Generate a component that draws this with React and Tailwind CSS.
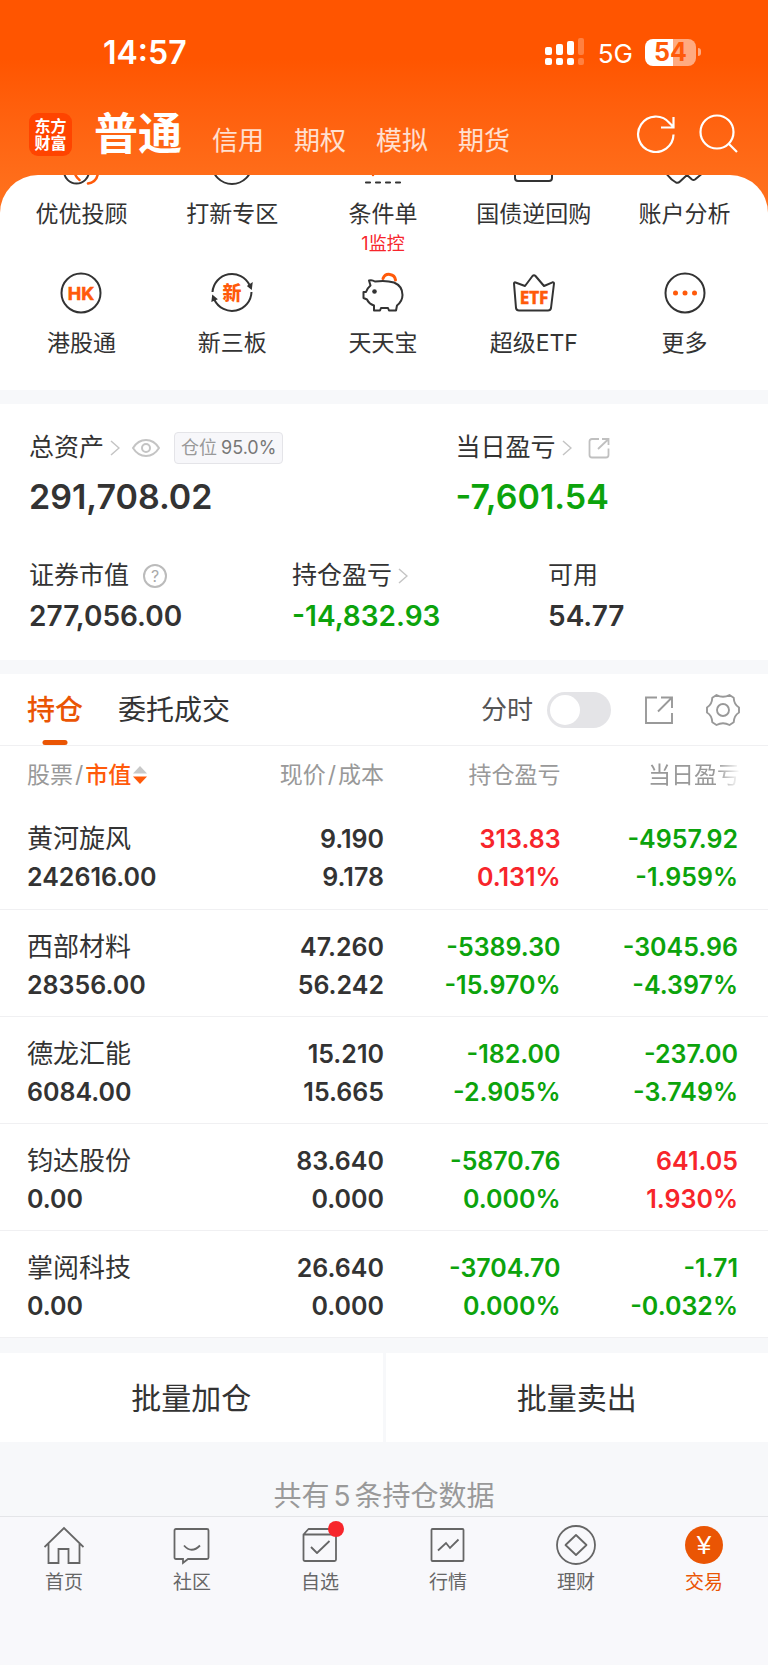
import React, { useState } from 'react';

const tones = {
  dark: 'text-[#333333]',
  up: 'text-[#f7252b]',
  down: 'text-[#0ca30c]',
};

const accountTabs = ['信用', '期权', '模拟', '期货'];

const holdings = [
  { name: '黄河旋风', value: '242616.00', price: '9.190', cost: '9.178', profit: '313.83', profitPct: '0.131%', day: '-4957.92', dayPct: '-1.959%', profitTone: 'up', dayTone: 'down' },
  { name: '西部材料', value: '28356.00', price: '47.260', cost: '56.242', profit: '-5389.30', profitPct: '-15.970%', day: '-3045.96', dayPct: '-4.397%', profitTone: 'down', dayTone: 'down' },
  { name: '德龙汇能', value: '6084.00', price: '15.210', cost: '15.665', profit: '-182.00', profitPct: '-2.905%', day: '-237.00', dayPct: '-3.749%', profitTone: 'down', dayTone: 'down' },
  { name: '钧达股份', value: '0.00', price: '83.640', cost: '0.000', profit: '-5870.76', profitPct: '0.000%', day: '641.05', dayPct: '1.930%', profitTone: 'down', dayTone: 'up' },
  { name: '掌阅科技', value: '0.00', price: '26.640', cost: '0.000', profit: '-3704.70', profitPct: '0.000%', day: '-1.71', dayPct: '-0.032%', profitTone: 'down', dayTone: 'down' },
];

/* ---------- icons ---------- */

function Icon({ size = 'size-[42px]', box = '0 0 42 42', width = 2, children }) {
  return (
    <svg viewBox={box} className={`${size} shrink-0`} fill="none" stroke="currentColor" strokeWidth={width} aria-hidden="true">
      {children}
    </svg>
  );
}

const AdvisorIcon = () => (
  <Icon>
    <circle cx="16.500" cy="28" r="12.500" />
    <path d="M15 31c1 2.500 2.500 4.500 4.500 6M28 40.500c6-1 9.500-5 10-11" stroke="#ff5a0a" strokeWidth="2.500" strokeLinecap="round" />
  </Icon>
);

const CircleIcon = () => (
  <Icon><circle cx="21" cy="21" r="20" /></Icon>
);

const ConditionIcon = () => (
  <Icon>
    <path d="M11 6v26" stroke="#ff5a0a" strokeLinecap="round" strokeWidth="2.500" />
    <path d="M4 39.500h36" strokeDasharray="4 6" strokeLinecap="round" strokeWidth="2.200" />
  </Icon>
);

const BondIcon = () => (
  <Icon><rect x="2" y="8" width="37" height="30" rx="3" /></Icon>
);

const AccountIcon = () => (
  <Icon><path d="M2 30Q6 36 12 39.500q2 1 4-1L23 32l5 4.500q1.500 1 3 0L40 29" strokeLinejoin="round" /></Icon>
);

const HkIcon = () => (
  <Icon>
    <circle cx="21" cy="21" r="19.500" />
    <text x="21" y="27.500" textAnchor="middle" fill="#ff5a0a" stroke="#ff5a0a" strokeWidth="0.600" fontSize="18" fontWeight="700">HK</text>
  </Icon>
);

const NewBoardIcon = () => (
  <Icon>
    <path d="M1.500 20A19.500 19.500 0 0 1 38.500 13M40.500 20A19.500 19.500 0 0 1 3.500 28" />
    <path d="m37.500 14 3-2-.500 4zM1.500 28.500l.500-4 3 2.500z" fill="currentColor" />
    <text x="21" y="28" textAnchor="middle" fill="#ff5a0a" stroke="none" fontSize="19" fontWeight="900">新</text>
  </Icon>
);

const PiggyIcon = () => (
  <Icon>
    <path d="M21 6.500a6.500 6.500 0 0 1 12.500 1.500" stroke="#ff5a0a" strokeWidth="3" strokeLinecap="round" />
    <path d="M13 9.500Q10 7.500 7 8.500l1.500 5Q5 16.500 4 20H1.500v6L5 27.500Q7 32 12 33.500V38.500h6l1-2.500h7l1 2.500h7l1-5Q40.500 29 40.500 23 40.500 14 32 10.500 24 8 13 9.500z" strokeLinejoin="round" />
    <circle cx="12.500" cy="19.500" r="2.300" fill="currentColor" stroke="none" />
  </Icon>
);

const EtfIcon = () => (
  <Icon>
    <path d="M1 11.500 3 36q.500 2.500 3 2.500h29q2.500 0 3-2.500l3-24.500q0-1.500-1.500-1.200L31 14 22.500 4q-1.500-1.500-3 0L12 14 2.500 10.500Q1 10 1 11.500z" strokeLinejoin="round" />
    <text x="21" y="31.500" textAnchor="middle" fill="#ff5a0a" stroke="#ff5a0a" strokeWidth="0.600" fontSize="17" fontWeight="700" fontFamily="Open Sans">
      ETF
    </text>
  </Icon>
);

const MoreIcon = () => (
  <Icon>
    <circle cx="21" cy="21" r="19.500" />
    <g fill="#ff5a0a" stroke="none">
      <circle cx="11.500" cy="21" r="2.500" />
      <circle cx="21" cy="21" r="2.500" />
      <circle cx="30.500" cy="21" r="2.500" />
    </g>
  </Icon>
);

const Chevron = () => (
  <svg viewBox="0 0 10 16" className="w-2.5 h-4 shrink-0 text-[#c4c4c4]" fill="none" stroke="currentColor" strokeWidth="1.500" aria-hidden="true">
    <path d="m1 1 8 7-8 7" />
  </svg>
);

const HomeIcon = () => (
  <Icon size="size-10" box="0 0 40 40" width="1.800">
    <path d="M.500 22 20 3l19.500 19M4.500 18.500v19.500h10V24h10v14h11V18.500" />
  </Icon>
);

const CommunityIcon = () => (
  <Icon size="size-10" box="0 0 40 40" width="1.800">
    <path d="M4 4h31q1.500 0 1.500 1.500v27q0 1.500-1.500 1.500H16l-5 4v-4H4q-1.500 0-1.500-1.500v-27Q2.500 4 4 4z" />
    <path d="M12 20.500q7.500 8.500 16 0" />
  </Icon>
);

const WatchlistIcon = () => (
  <Icon size="size-10" box="0 0 40 40" width="1.800">
    <path d="M3.500 9.500h32.500v25q0 1.500-1.500 1.500H5Q3.500 36 3.500 34.500zl5-5.500h22l5.500 5.500M11 22l6 6L29.500 16" strokeLinejoin="round" />
  </Icon>
);

const MarketIcon = () => (
  <Icon size="size-10" box="0 0 40 40" width="1.800">
    <rect x="3.500" y="4" width="32" height="32" rx="1" />
    <path d="m10 25.500 8-7.500 4 5 8.500-8.500" />
  </Icon>
);

const WealthIcon = () => (
  <Icon size="size-10" box="0 0 40 40" width="1.800">
    <circle cx="20" cy="20" r="19" />
    <path d="m20 10 10.500 10L20 30 9.500 20z" strokeLinejoin="round" />
  </Icon>
);

const TradeIcon = () => (
  <Icon size="size-10" box="0 0 40 40" width="0">
    <circle cx="20" cy="20" r="19" fill="#ea5504" />
    <text x="20" y="29" textAnchor="middle" fill="#fff" stroke="none" fontSize="26" fontFamily="Liberation Sans">¥</text>
  </Icon>
);

const shortcutRows = [
  [
    { label: '优优投顾', icon: AdvisorIcon },
    { label: '打新专区', icon: CircleIcon },
    { label: '条件单', icon: ConditionIcon, note: '1监控' },
    { label: '国债逆回购', icon: BondIcon },
    { label: '账户分析', icon: AccountIcon },
  ],
  [
    { label: '港股通', icon: HkIcon },
    { label: '新三板', icon: NewBoardIcon },
    { label: '天天宝', icon: PiggyIcon },
    { label: '超级ETF', icon: EtfIcon },
    { label: '更多', icon: MoreIcon },
  ],
];

const navItems = [
  { label: '首页', icon: HomeIcon },
  { label: '社区', icon: CommunityIcon },
  { label: '自选', icon: WatchlistIcon, dot: true },
  { label: '行情', icon: MarketIcon },
  { label: '理财', icon: WealthIcon },
  { label: '交易', icon: TradeIcon, active: true },
];

/* ---------- sections ---------- */

function StatusBar() {
  return (
    <div className="flex h-[104px] items-center justify-between pl-[103px] pr-[67px]">
      <span className="pt-0.5 text-[32px] font-semibold">14:57</span>
      <div className="flex items-center">
        <svg viewBox="0 0 39 28" className="w-[39px] h-7" fill="#fff" aria-hidden="true">
          <rect x="0" y="9" width="7" height="8" rx="2" />
          <rect x="11" y="6" width="7" height="11" rx="2" />
          <rect x="22" y="3" width="7" height="14" rx="2" />
          <rect x="0" y="20" width="7" height="7" rx="2" />
          <rect x="11" y="20" width="7" height="7" rx="2" />
          <rect x="22" y="20" width="7" height="7" rx="2" />
          <g opacity="0.250">
            <rect x="33" y="0" width="6" height="17" rx="2" />
            <rect x="33" y="20" width="6" height="7" rx="2" />
          </g>
        </svg>
        <span className="ml-3.5 pt-0.5 text-[26px]">5G</span>
        <div className="ml-3 flex h-[27px] w-[51px] items-center justify-center rounded-lg bg-linear-to-r from-white from-55% to-[#ffaa80] to-55% text-[25px]/[27px] font-bold text-[#ff5a0a]">
          54
        </div>
        <div className="ml-0.5 h-2 w-[3px] rounded-r-full bg-[#ffaa80]" />
      </div>
    </div>
  );
}

function Header() {
  return (
    <header className="text-white">
      <StatusBar />
      <div className="flex h-[71px] items-start pl-[29px] pr-[30px]">
        <div className="mt-[9px] flex size-[43px] flex-col items-center justify-center rounded-[9px] bg-[#ff4400] text-base/[17px] font-bold">
          <span>东方</span>
          <span>财富</span>
        </div>
        <nav className="ml-[22px] flex items-baseline gap-[30px]">
          <a href="#normal" className="text-[44px]/[60px] font-bold">普通</a>
          {accountTabs.map((tab) => (
            <a key={tab} href={`#${tab}`} className="text-[26px] text-white/80">{tab}</a>
          ))}
        </nav>
        <div className="ml-auto mt-2.5 flex gap-[22px]">
          <button type="button" aria-label="刷新">
            <Icon size="size-10" box="0 0 40 40" width="2.200">
              <path d="M37.500 20.500A17.700 17.700 0 1 1 33.500 9L37 12.500M25 13.500h12.500V3" />
            </Icon>
          </button>
          <button type="button" aria-label="搜索">
            <Icon size="size-10" box="0 0 40 40" width="2.200">
              <circle cx="19" cy="18" r="16.500" />
              <path d="m30.500 29.500 8.500 8.500" />
            </Icon>
          </button>
        </div>
      </div>
    </header>
  );
}

function Shortcuts() {
  return (
    <section className="overflow-hidden rounded-t-[38px] bg-white pb-[31px] pl-1.5 pr-2 text-[#333333]">
      {shortcutRows.map((row, idx) => (
        <div key={idx} className={`grid grid-cols-5 ${idx === 0 ? '-mt-8' : 'mt-4'}`}>
          {row.map(({ label, icon: Glyph, note }) => (
            <a key={label} href={`#${label}`} className="flex flex-col items-center">
              <Glyph />
              <span className="mt-[13px] whitespace-nowrap text-[23px]/8">{label}</span>
              {note && <span className="mt-0.5 text-lg/6 text-[#f7252b]">{note}</span>}
            </a>
          ))}
        </div>
      ))}
    </section>
  );
}

function Assets() {
  return (
    <section className="bg-white pb-[26px] pl-[29px] pr-7 pt-[26px] text-[#333333]">
      <div className="grid grid-cols-[60fr_40fr]">
        <div>
          <div className="flex h-9 items-center text-[25px]">
            总资产
            <span className="ml-1.5"><Chevron /></span>
            <button type="button" aria-label="隐藏资产" className="ml-3 text-[#c4c4c4]">
              <svg viewBox="0 0 28 20" className="w-7 h-5" fill="none" stroke="currentColor" strokeWidth="2" aria-hidden="true">
                <path d="M1 10Q6 2 14 2t13 8q-5 8-13 8T1 10z" />
                <circle cx="14" cy="10" r="4" />
              </svg>
            </button>
            <span className="ml-3.5 flex h-8 items-center gap-1 rounded border border-[#e4e4e8] bg-[#f7f7fa] px-1.5 text-lg text-[#777777]">
              <span className="text-[#999999]">仓位</span> 95.0%
            </span>
          </div>
          <p className="mt-[11px] text-[34px]/10 font-semibold">291,708.02</p>
        </div>
        <div>
          <div className="flex h-9 items-center text-[25px]">
            当日盈亏
            <span className="ml-1.5"><Chevron /></span>
            <button type="button" aria-label="分享当日盈亏" className="ml-4 text-[#c0c0c0]">
              <svg viewBox="0 0 22 22" className="size-[22px]" fill="none" stroke="currentColor" strokeWidth="1.800" aria-hidden="true">
                <path d="M11 2H4Q1.500 2 1.500 4.500V18q0 2.500 2.500 2.500h14q2.500 0 2.500-2.500v-6.500M14 2h6.500v6M20 2.500l-10 9.500" />
              </svg>
            </button>
          </div>
          <p className="mt-[11px] text-[34px]/10 font-semibold text-[#0ca30c]">-7,601.54</p>
        </div>
      </div>
      <div className="mt-[41px] grid grid-cols-[37fr_36fr_27fr]">
        <div>
          <div className="flex h-9 items-center text-[25px]">
            证券市值
            <button type="button" aria-label="证券市值说明" className="ml-3.5 flex size-6 items-center justify-center rounded-full border-2 border-[#bbbbbb] text-base text-[#aaaaaa]">
              ?
            </button>
          </div>
          <p className="mt-1 text-[28px]/9 font-semibold">277,056.00</p>
        </div>
        <div>
          <div className="flex h-9 items-center text-[25px]">
            持仓盈亏
            <span className="ml-1.5"><Chevron /></span>
          </div>
          <p className="mt-1 text-[28px]/9 font-semibold text-[#0ca30c]">-14,832.93</p>
        </div>
        <div>
          <div className="flex h-9 items-center text-[25px]">可用</div>
          <p className="mt-1 text-[28px]/9 font-semibold">54.77</p>
        </div>
      </div>
    </section>
  );
}

function HoldingTabs() {
  const [minuteChart, setMinuteChart] = useState(false);

  return (
    <div className="flex h-[72px] items-center border-b border-[#f0f0f2] pl-[27px] pr-7 text-[28px] text-[#333333]">
      <button type="button" className="relative h-full font-medium text-[#ea5504]">
        持仓
        <span className="absolute bottom-0 left-1/2 h-[5px] w-[25px] -translate-x-1/2 rounded-sm bg-[#ea5504]" />
      </button>
      <button type="button" className="ml-[35px] h-full">委托成交</button>
      <label htmlFor="minute" className="ml-auto text-[26px] text-[#555555]">分时</label>
      <input
        id="minute"
        type="checkbox"
        checked={minuteChart}
        onChange={(e) => setMinuteChart(e.target.checked)}
        className="ml-3.5 h-9 w-16 appearance-none rounded-full bg-[#e4e4e7] p-[3px] before:block before:size-[30px] before:rounded-full before:bg-white checked:bg-[#ea5504] checked:before:ml-auto"
      />
      <button type="button" aria-label="分享持仓" className="ml-[34px] text-[#999999]">
        <Icon size="size-7" box="0 0 28 28" width="1.900">
          <path d="M12 1.500H1v25.500h26V17M16 1.500h11V12M26.500 2 13 15.500" />
        </Icon>
      </button>
      <button type="button" aria-label="设置" className="ml-[33px] text-[#999999]">
        <Icon size="size-[34px]" box="0 0 34 34" width="1.900">
          <path d="M10.500 2q6.500 3.500 13 0l4.200 2.700q.3 6.800 5.300 9.800v5q-5 3-5.300 9.800L23.500 32q-6.500-3.500-13 0l-4.200-2.700Q6 22.500 1 19.500v-5q5-3 5.300-9.800z" strokeLinejoin="round" />
          <circle cx="17" cy="17" r="6" />
        </Icon>
      </button>
    </div>
  );
}

function PairCell({ top, bottom, tone, className = '' }) {
  return (
    <td className={`pt-1.5 text-right ${tones[tone]} ${className}`}>
      <div>{top}</div>
      <div>{bottom}</div>
    </td>
  );
}

function Holdings() {
  return (
    <section className="bg-white">
      <HoldingTabs />
      <table className="w-full table-fixed">
        <thead>
          <tr className="h-14 text-[23px] text-[#999999] *:pt-0.5 *:font-normal">
            <th className="w-[26%] whitespace-nowrap pl-[27px] text-left">
              <div className="flex items-center">
                股票<span className="mx-0.5">/</span>
                <button type="button" className="flex items-center gap-0.5 font-medium text-[#ff5a0a]">
                  市值
                  <svg viewBox="0 0 14 20" className="w-3.5 h-5" aria-hidden="true">
                    <path d="M0 8.500 7 1l7 7.500z" fill="#c8c8c8" />
                    <path d="M0 11.500 7 19l7-7.500z" fill="#ff5a0a" />
                  </svg>
                </button>
              </div>
            </th>
            <th className="w-[24%] text-right">现价<span className="mx-0.5">/</span>成本</th>
            <th className="w-[23%] text-right">持仓盈亏</th>
            <th className="w-[27%] pr-7 text-right">
              <span className="[mask-image:linear-gradient(to_right,black_75%,transparent)]">当日盈亏</span>
            </th>
          </tr>
        </thead>
        <tbody className="text-[25px]/[38px] font-semibold text-[#333333]">
          {holdings.map((row) => (
            <tr key={row.name} className="h-[107px] border-b border-[#f0f0f2]">
              <td className="pl-[27px] pt-1.5">
                <div className="text-[26px]/[38px] font-normal">{row.name}</div>
                <div>{row.value}</div>
              </td>
              <PairCell top={row.price} bottom={row.cost} tone="dark" />
              <PairCell top={row.profit} bottom={row.profitPct} tone={row.profitTone} />
              <PairCell top={row.day} bottom={row.dayPct} tone={row.dayTone} className="pr-[30px]" />
            </tr>
          ))}
        </tbody>
      </table>
    </section>
  );
}

function BottomNav() {
  return (
    <nav className="grid grow grid-cols-6 border-t border-[#e4e5e8] bg-[#f8f8fb] pb-[70px] pt-2">
      {navItems.map(({ label, icon: Glyph, dot, active }) => (
        <a
          key={label}
          href={`#${label}`}
          className={`flex flex-col items-center ${active ? 'text-[#ea5504]' : 'text-[#666666]'}`}
        >
          <span className="relative">
            <Glyph />
            {dot && <span className="absolute -right-1 -top-1 size-4 rounded-full bg-[#f7252b]" />}
          </span>
          <span className="mt-1.5 text-[19px]/6">{label}</span>
        </a>
      ))}
    </nav>
  );
}

export default function App() {
  return (
    <div className="flex min-h-screen flex-col bg-[#f7f8fa] font-['Inter','Noto_Sans_CJK_SC',sans-serif]">
      <div className="bg-linear-to-b from-[#ff5500] from-15% to-[#ff701c] to-50%">
        <Header />
        <Shortcuts />
      </div>
      <div className="mt-3.5"><Assets /></div>
      <div className="mt-3.5"><Holdings /></div>
      <div className="mt-[15px] grid grid-cols-2 gap-[3px] text-[30px] text-[#333333]">
        <button type="button" className="h-[89px] bg-white pt-0.5">批量加仓</button>
        <button type="button" className="h-[89px] bg-white pt-0.5">批量卖出</button>
      </div>
      <p className="pb-0.5 pt-9 text-center text-[28px]/9 text-[#999999]">
        共有<span className="mx-1">5</span>条持仓数据
      </p>
      <BottomNav />
    </div>
  );
}
